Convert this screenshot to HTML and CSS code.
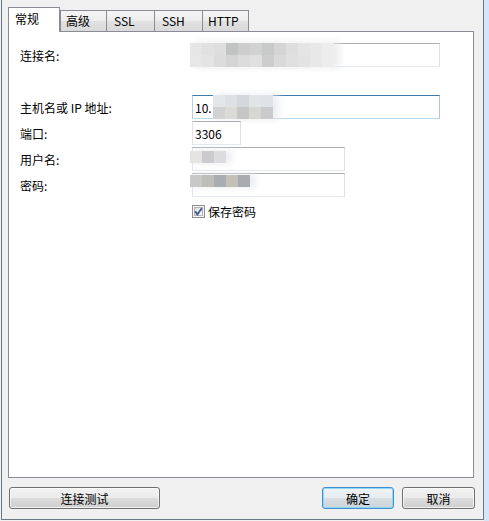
FILE: index.html
```html
<!DOCTYPE html>
<html lang="zh-CN">
<head>
  <meta charset="UTF-8">
  <meta name="viewport" content="width=device-width, initial-scale=1.0">
  <title>连接属性</title>
  <link rel="stylesheet" href="styles.css">
</head>

<body>
  <div class="window">
    <div class="tabs">
      <div class="tab active">常规</div>
      <div class="tab">高级</div>
      <div class="tab">SSL</div>
      <div class="tab">SSH</div>
      <div class="tab">HTTP</div>
    </div>

    <div class="panel">
      <div class="row rowName">
        <label>连接名:</label>
        <div class="field wide">
          <input type="text" value="">
          <div class="blur blurName" data-mosaic="name"></div>
        </div>
      </div>
      <div class="row">
        <label>主机名或 IP 地址:</label>
        <div class="field wide">
          <input type="text" class="focused" value="10.">
          <div class="blur blurHost" data-mosaic="host"></div>
        </div>
      </div>
      <div class="row">
        <label>端口:</label>
        <div class="field port">
          <input type="text" value="3306">
        </div>
      </div>
      <div class="row">
        <label>用户名:</label>
        <div class="field medium">
          <input type="text" value="">
          <div class="blur blurUser" data-mosaic="user"></div>
        </div>
      </div>
      <div class="row">
        <label>密码:</label>
        <div class="field medium">
          <input type="password" value="">
          <div class="blur blurPassword" data-mosaic="password"></div>
        </div>
      </div>
      <div class="row checkRow">
        <span class="checkbox">
          <svg width="13" height="13" viewBox="0 0 13 13">
            <defs>
              <linearGradient id="boxFill" x1="0" y1="0" x2="1" y2="1">
                <stop offset="0" stop-color="#dcdcdc"/>
                <stop offset="1" stop-color="#ffffff"/>
              </linearGradient>
            </defs>
            <rect x="0.5" y="0.5" width="12" height="12" fill="#f4f4f4" stroke="#8f8f8f"/>
            <rect x="2.5" y="2.5" width="8" height="8" fill="url(#boxFill)" stroke="#b3b3b3"/>
            <path d="M3.2 6.4 L5.4 9.4 L9.8 3.2" fill="none" stroke="#3f5597" stroke-width="1.8"/>
          </svg>
        </span>
        <span>保存密码</span>
      </div>
    </div>

    <div class="footer">
      <button class="btn btnTest">连接测试</button>
      <div class="spacer"></div>
      <button class="btn btnDefault">确定</button>
      <button class="btn">取消</button>
    </div>
  </div>

  <script>
    // pixelated cover over the hidden values
    const mosaics = {
      name: {cols: 12, colors: [
        "#e6e6e6", "#e1e1e1", "#dedede", "#c1c3c3", "#cdcdcd", "#d2d2d2", "#c8c9c9", "#d5d5d5", "#dedede", "#e5e5e5", "#e8e8e8", "#ededed",
        "#e7e7e7", "#e4e4e4", "#dcdcdc", "#d4d4d4", "#dcdcdc", "#e0e0e0", "#cdcdcd", "#dadada", "#e0e0e0", "#e3e3e3", "#e8e8e8", "#ededed"
      ]},
      host: {cols: 5, colors: [
        "#e3e6ea", "#dde0e4", "#d4d7dc", "#e2e5e8", "#dfe2e6",
        "#d2d2d2", "#dcdad6", "#c6c6c6", "#d8d6d2", "#cacaca"
      ]},
      user: {cols: 3, colors: ["#e6e4e2", "#cbcbcd", "#dcdcde"]},
      password: {cols: 5, colors: ["#c8c8c8", "#bfbdb8", "#a9acb0", "#c3c0ba", "#a9acaf"]}
    }

    const covers = document.querySelectorAll(".blur")
    for (let i = 0; i < covers.length; i++) {
      const cover = covers[i]
      const mosaic = mosaics[cover.dataset.mosaic]
      cover.style.gridTemplateColumns = `repeat(${mosaic.cols}, 12px)`
      for (let c = 0; c < mosaic.colors.length; c++) {
        const cell = document.createElement("span")
        cell.style.background = mosaic.colors[c]
        cover.appendChild(cell)
      }
    }
  </script>
</body>
</html>
```

FILE: styles.css
```css
html, body {
  margin: 0;
  height: 100%;
}

body {
  background: linear-gradient(to right, #f0f0f0 484px, #d3e6f8 484px);
  font-family: "Noto Sans CJK SC", "Liberation Sans", sans-serif;
  font-size: 12px;
  color: #000;
}

.window {
  width: 483px;
  box-sizing: border-box;
  margin-left: 1px;
  padding: 7px 9px 10px 6px;
  background-color: #f0f0f0;
  border: 1px solid #6b7886;
  border-top: none;
}

.tabs {
  display: flex;
  align-items: flex-end;
  margin-bottom: -1px;
  position: relative;
  z-index: 1;
}

.tab {
  box-sizing: border-box;
  width: 47px;
  height: 22px;
  margin-left: -1px;
  padding-left: 5px;
  line-height: 20px;
  border: 1px solid #898c95;
  background: linear-gradient(#f4f4f4, #ededed 50%, #e2e2e2 50%, #d9d9d9);
}

.tab.active {
  width: 52px;
  height: 25px;
  margin-left: 0;
  margin-right: 1px;
  padding-left: 6px;
  line-height: 21px;
  border-bottom: none;
  background: #fff;
  position: relative;
  z-index: 2;
}

.tab:nth-child(3),
.tab:nth-child(4) {
  width: 49px;
  padding-left: 7px;
}

.panel {
  box-sizing: border-box;
  height: 447px;
  padding: 11px 0 0 11px;
  background-color: #fff;
  border: 1px solid #898c95;
}

.row {
  display: flex;
  align-items: center;
  height: 24px;
  margin-bottom: 2px;
}

.rowName {
  margin-bottom: 28px;
}

.row label {
  width: 172px;
  flex-shrink: 0;
}

.field {
  position: relative;
  height: 24px;
}

.field.wide {
  width: 248px;
}

.field.medium {
  width: 153px;
}

.field.port {
  width: 49px;
}

.field input {
  box-sizing: border-box;
  width: 100%;
  height: 100%;
  margin: 0;
  padding: 0 2px;
  font: inherit;
  color: #000;
  border: 1px solid;
  border-color: #abadb3 #dbdfe6 #e3e9ef #e2e3ea;
  outline: none;
}

.field input.focused {
  border-color: #3d7bad #a4c9e3 #b7d9ed #b5cfe7;
}

.blur {
  position: absolute;
  display: grid;
  grid-auto-rows: 12px;
  border-radius: 2px;
  box-shadow: 5px 0 6px 1px rgba(232, 234, 238, 0.8);
}

.blurName {
  left: -2px;
  top: 0;
}

.blurHost {
  left: 21px;
  top: 0;
}

.blurUser {
  left: -2px;
  top: 4px;
}

.blurPassword {
  left: -2px;
  top: 2px;
}

.checkRow {
  padding-left: 172px;
  gap: 3px;
}

.checkbox {
  display: flex;
  width: 13px;
  height: 13px;
}

.footer {
  display: flex;
  height: 22px;
  margin: 9px -1px 0 1px;
}

.spacer {
  flex: 1;
}

.btn {
  box-sizing: border-box;
  width: 73px;
  height: 22px;
  padding: 0;
  font: inherit;
  color: #000;
  border: 1px solid #707070;
  border-radius: 3px;
  background: linear-gradient(#f2f2f2, #ebebeb 50%, #dddddd 50%, #cfcfcf);
  box-shadow: inset 0 0 0 1px rgba(255, 255, 255, 0.7);
}

.btnTest {
  width: 151px;
}

.btnDefault {
  width: 72px;
  margin-right: 8px;
  border-color: #3c8fd0;
  box-shadow: inset 0 0 0 1px #8fd8f8;
  background: linear-gradient(#eef3f6, #e6ecef 50%, #d8dfe3 50%, #ccd4d9);
}
```
